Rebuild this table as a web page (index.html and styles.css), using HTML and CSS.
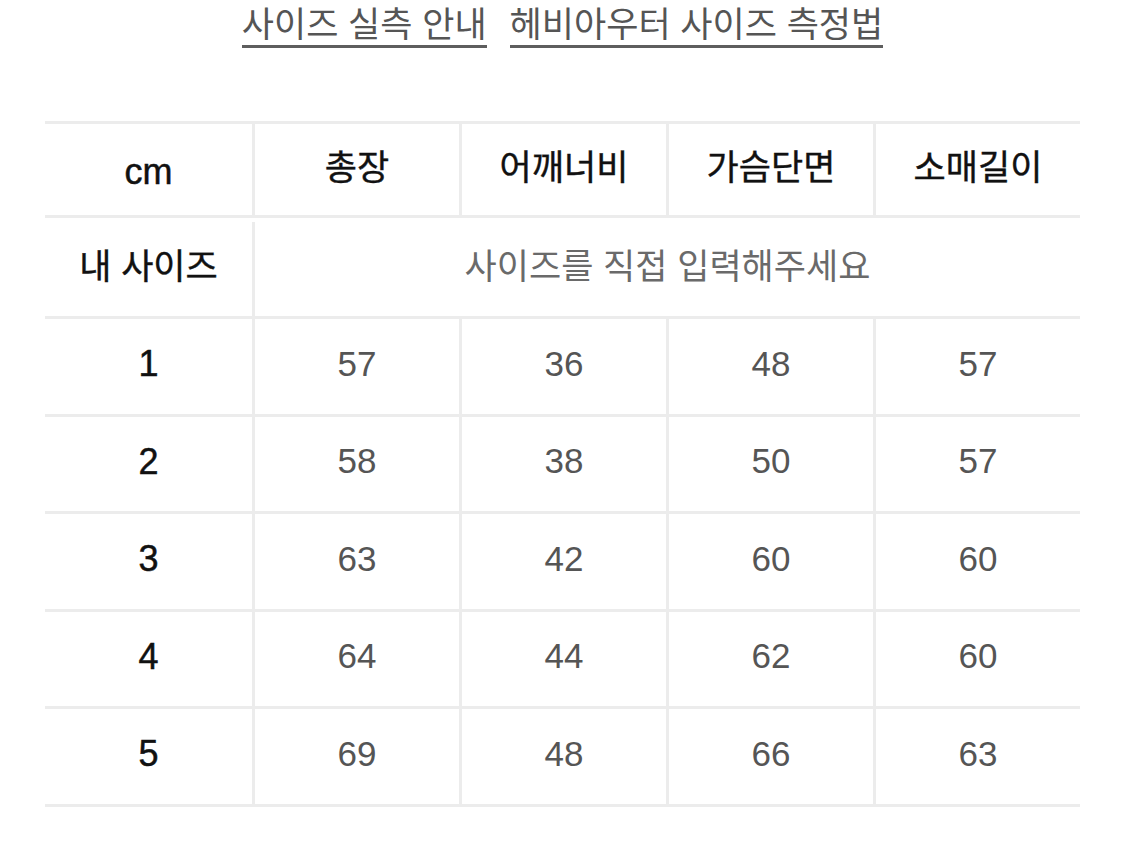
FILE: index.html
```html
<!DOCTYPE html>
<html lang="ko">
<head>
<meta charset="utf-8">
<title>사이즈 실측 안내</title>
<link rel="stylesheet" href="styles.css">
</head>
<body>
<div class="links">
  <a class="link" href="#">사이즈 실측 안내</a>
  <a class="link" href="#">헤비아우터 사이즈 측정법</a>
</div>
<div class="size-table">
  <div class="cell head corner"><span class="latin">cm</span></div>
  <div class="cell head">총장</div>
  <div class="cell head">어깨너비</div>
  <div class="cell head">가슴단면</div>
  <div class="cell head">소매길이</div>

  <div class="cell label">내 사이즈</div>
  <div class="cell span placeholder">사이즈를 직접 입력해주세요</div>

  <div class="cell label"><span class="latin">1</span></div>
  <div class="cell num">57</div>
  <div class="cell num">36</div>
  <div class="cell num">48</div>
  <div class="cell num">57</div>

  <div class="cell label"><span class="latin">2</span></div>
  <div class="cell num">58</div>
  <div class="cell num">38</div>
  <div class="cell num">50</div>
  <div class="cell num">57</div>

  <div class="cell label"><span class="latin">3</span></div>
  <div class="cell num">63</div>
  <div class="cell num">42</div>
  <div class="cell num">60</div>
  <div class="cell num">60</div>

  <div class="cell label"><span class="latin">4</span></div>
  <div class="cell num">64</div>
  <div class="cell num">44</div>
  <div class="cell num">62</div>
  <div class="cell num">60</div>

  <div class="cell label"><span class="latin">5</span></div>
  <div class="cell num">69</div>
  <div class="cell num">48</div>
  <div class="cell num">66</div>
  <div class="cell num">63</div>
</div>
</body>
</html>
```
FILE: styles.css
```css
* { box-sizing: border-box; }
html, body { margin: 0; padding: 0; background: #fff; }
body {
  font-family: "Liberation Sans", "Noto Sans CJK KR", sans-serif;
  color: #111;
  width: 1125px;
  height: 863px;
  overflow: hidden;
}
.links {
  display: flex;
  justify-content: center;
  gap: 23px;
  padding-top: 7px;
  height: 121px;
  align-items: flex-start;
}
.link {
  display: inline-block;
  font-size: 35px;
  line-height: 35px;
  color: #555;
  text-decoration: none;
  padding-bottom: 3px;
  border-bottom: 3px solid #5e5e5e;
}
.size-table {
  margin-left: 45px;
  width: 1035px;
  display: grid;
  grid-template-columns: repeat(5, 1fr);
  grid-auto-rows: 97.5px;
  border-top: 3px solid #ececec;
}
.size-table .head { height: 94px; padding-bottom: 4px; }
.size-table .corner { padding-bottom: 0; padding-top: 4px; }
.cell {
  display: flex;
  align-items: center;
  justify-content: center;
  border-bottom: 3px solid #ececec;
  font-size: 35px;
  line-height: 1;
}
.cell:not(.head):not(.label) { border-left: 3px solid #ececec; }
.head:not(:first-child) { border-left: 3px solid #ececec; }
.head { font-weight: 400; color: #111; -webkit-text-stroke: 0.4px #111; }
.label { font-weight: 400; color: #111; -webkit-text-stroke: 0.4px #111; padding-bottom: 4px; }
.latin { font-size: 36px; font-weight: 400; -webkit-text-stroke: 0.5px #111; }
.span { grid-column: span 4; }
.placeholder { color: #6a6a6a; padding-bottom: 4px; }
.num { color: #555; padding-bottom: 6px; }
```
